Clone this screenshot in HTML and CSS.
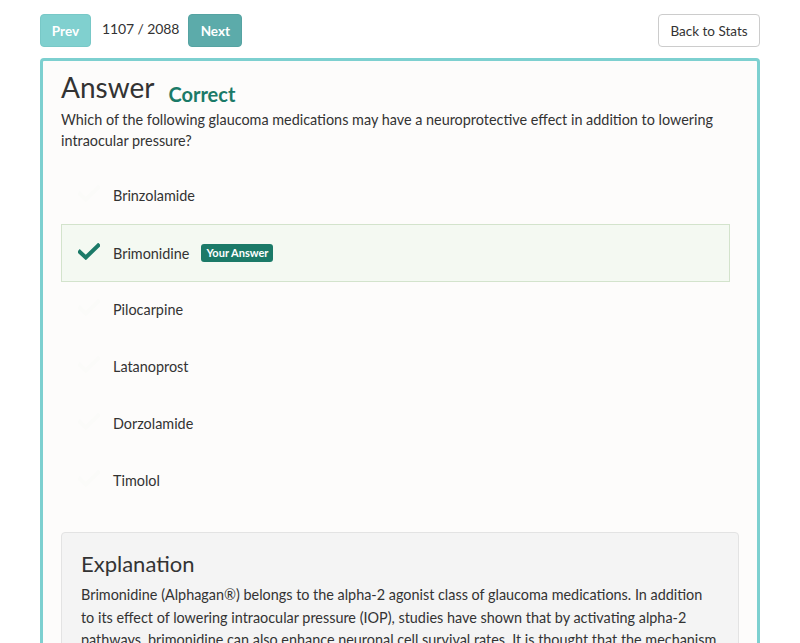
FILE: index.html
```html
<!DOCTYPE html>
<html>
<head>
<meta charset="utf-8">
<link rel="stylesheet" href="styles.css">
</head>
<body>
<div class="page">
  <div class="topbar">
    <div class="nav">
      <button class="btn btn-prev">Prev</button>
      <span class="count">1107 / 2088</span>
      <button class="btn btn-next">Next</button>
    </div>
    <button class="btn btn-back">Back to Stats</button>
  </div>
  <div class="card">
    <div class="head">
      <h1 class="title">Answer</h1>
      <span class="status">Correct</span>
    </div>
    <p class="question">Which of the following glaucoma medications may have a neuroprotective effect in addition to lowering intraocular pressure?</p>
    <div class="options">
      <div class="option"><svg class="check" viewBox="0 0 24 18"><path d="M2 9.5 L8.5 15.5 L22 2.5" /></svg><span>Brinzolamide</span></div>
      <div class="option selected"><svg class="check" viewBox="0 0 24 18"><path d="M2 9.5 L8.5 15.5 L22 2.5" /></svg><span>Brimonidine</span><span class="badge">Your Answer</span></div>
      <div class="option"><svg class="check" viewBox="0 0 24 18"><path d="M2 9.5 L8.5 15.5 L22 2.5" /></svg><span>Pilocarpine</span></div>
      <div class="option"><svg class="check" viewBox="0 0 24 18"><path d="M2 9.5 L8.5 15.5 L22 2.5" /></svg><span>Latanoprost</span></div>
      <div class="option"><svg class="check" viewBox="0 0 24 18"><path d="M2 9.5 L8.5 15.5 L22 2.5" /></svg><span>Dorzolamide</span></div>
      <div class="option"><svg class="check" viewBox="0 0 24 18"><path d="M2 9.5 L8.5 15.5 L22 2.5" /></svg><span>Timolol</span></div>
    </div>
    <div class="explanation">
      <h2 class="exp-title">Explanation</h2>
      <p class="exp-text">Brimonidine (Alphagan®) belongs to the alpha-2 agonist class of glaucoma medications. In addition to its effect of lowering intraocular pressure (IOP), studies have shown that by activating alpha-2 pathways, brimonidine can also enhance neuronal cell survival rates. It is thought that the mechanism of this neuroprotection involves upregulation of neurotrophic factors and inhibition of excitotoxic damage.</p>
    </div>
  </div>
</div>
</body>
</html>
```

FILE: styles.css
```css
* { box-sizing: border-box; }
html, body { margin: 0; padding: 0; background: #ffffff; }
body {
  font-family: "Lato", "Open Sans", sans-serif;
  color: #333333;
  font-size: 14.4px;
  overflow: hidden;
  height: 643px;
}
.page { padding: 14px 40px 0 40px; width: 800px; }
.topbar { display: flex; justify-content: space-between; align-items: center; height: 33px; }
.nav { display: flex; align-items: center; }
.btn {
  font-family: inherit;
  font-size: 13.5px;
  height: 33px;
  border-radius: 4px;
  border: 1px solid transparent;
  padding: 0;
  cursor: pointer;
}
.btn-prev { background: #80d0cf; color: #fff; font-weight: 700; width: 51px; border-color: #78c8c7; }
.btn-next { background: #5cabaa; color: #fff; font-weight: 700; width: 54px; border-color: #55a3a2; }
.count { margin: 0 9px 0 11px; font-size: 14px; color: #333; position: relative; top: -2px; letter-spacing: -0.1px; }
.btn-back { background: #fff; border-color: #cccccc; color: #333; width: 102px; }
.card {
  margin-top: 11px;
  border: 3px solid #7dd0d0;
  border-radius: 4px 4px 0 0;
  background: #fdfcfb;
  padding: 7px 18px 30px 18px;
  height: 600px;
}
.head { display: flex; align-items: baseline; }
.title { font-size: 28px; font-weight: 400; margin: 0; color: #333; line-height: 38px; }
.status { font-size: 20px; font-weight: 700; color: #1b7a68; margin-left: 14px; position: relative; top: 4px; }
.question { margin: 3px 0 0 0; line-height: 21px; }
.options { margin-top: 16px; margin-right: 9px; }
.option {
  display: flex;
  align-items: center;
  height: 57px;
  padding-left: 16px;
  border: 1px solid transparent;
}
.option.selected { background: #f4f9f2; border-color: #d3e3cc; height: 58px; margin-bottom: -1px; }
.option span:first-of-type { position: relative; left: -1px; }
.check { width: 22px; height: 17px; margin-right: 14px; position: relative; top: -2px; }
.check path { fill: none; stroke: #fbfbf9; stroke-width: 4.4; stroke-linecap: square; }
.option.selected .check path { stroke: #1b7a68; }
.badge {
  background: #1b7a68;
  color: #fff;
  font-size: 11px;
  font-weight: 700;
  padding: 3px 5px;
  border-radius: 3px;
  margin-left: 11px;
  line-height: 12px;
}
.explanation {
  margin-top: 23px;
  background: #f4f4f4;
  border: 1px solid #e3e3e3;
  border-radius: 4px;
  padding: 17px 19px;
}
.exp-title { font-size: 22px; font-weight: 400; margin: 0 0 6px 0; line-height: 28px; }
.exp-text { margin: 0; line-height: 22.5px; }
```
